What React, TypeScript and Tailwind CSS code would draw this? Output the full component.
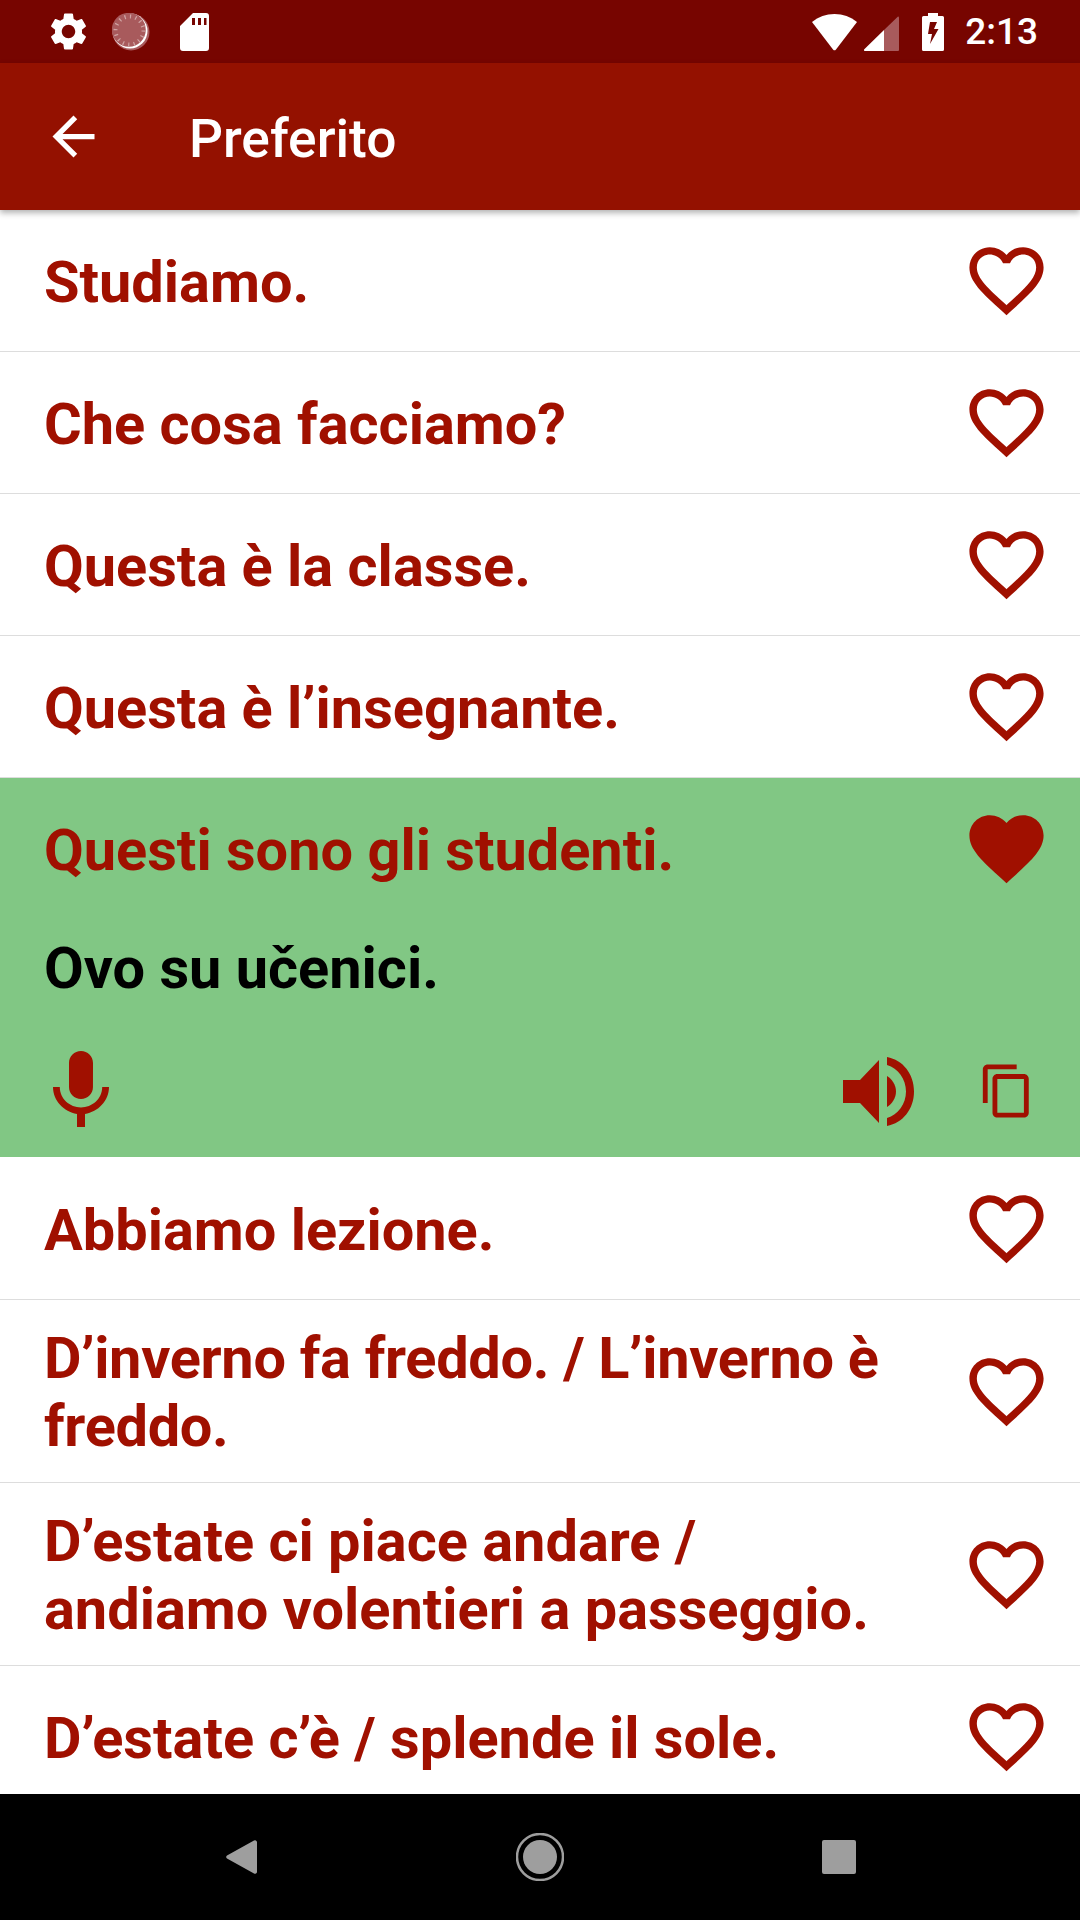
import React from "react";

const RED = "#a01000";
const HEART = "M16.5 3c-1.74 0-3.41.81-4.5 2.09C10.91 3.81 9.24 3 7.5 3 4.42 3 2 5.42 2 8.5c0 3.78 3.4 6.86 8.55 11.54L12 21.35l1.45-1.32C18.6 15.36 22 12.28 22 8.5 22 5.42 19.58 3 16.5 3z";
const HEART_O = "M16.5 3c-1.74 0-3.41.81-4.5 2.09C10.91 3.81 9.24 3 7.5 3 4.42 3 2 5.42 2 8.5c0 3.78 3.4 6.86 8.55 11.54L12 21.35l1.45-1.32C18.6 15.36 22 12.28 22 8.5 22 5.42 19.58 3 16.5 3zm-4.4 15.55l-.1.1-.1-.1C7.14 14.24 4 11.39 4 8.5 4 6.5 5.5 5 7.5 5c1.54 0 3.04.99 3.57 2.36h1.87C13.46 5.99 14.96 5 16.5 5c2 0 3.5 1.5 3.5 3.5 0 2.89-3.14 5.74-7.9 10.05z";

function Heart({ filled }: { filled?: boolean }) {
  return (
    <svg viewBox="0 0 24 24" className="w-[89px] h-[89px] shrink-0" fill={RED}>
      <path d={filled ? HEART : HEART_O} />
    </svg>
  );
}

function Row({ text, tight }: { text: string; tight?: boolean }) {
  return (
    <div className="flex items-center justify-between min-h-[142px] py-[23px] pl-[44px] pr-[29px] border-b border-[#dddddd] shrink-0">
      <div className={tight ? "text-[57.7px] leading-[68px] font-bold text-[#a01000] w-[860px] pt-[1px] mb-[-1px] tracking-[-0.3px]" : "text-[57.7px] leading-[68px] font-bold text-[#a01000] w-[860px] pt-[1px] mb-[-1px]"}>{text}</div>
      <Heart />
    </div>
  );
}

export default function App() {
  return (
    <div className="w-[1080px] h-[1920px] flex flex-col bg-white overflow-hidden font-['Roboto',sans-serif]">
      {/* Status bar */}
      <div className="h-[63px] bg-[#770500] flex items-center shrink-0 pl-[46px] pr-[42px]">
        <svg viewBox="0 0 24 24" className="w-[45px] h-[45px]" fill="#fff">
          <path d="M19.14 12.94c.04-.3.06-.61.06-.94 0-.32-.02-.64-.07-.94l2.03-1.58c.18-.14.23-.41.12-.61l-1.92-3.32c-.12-.22-.37-.29-.59-.22l-2.39.96c-.5-.38-1.03-.7-1.62-.94l-.36-2.54c-.04-.24-.24-.41-.48-.41h-3.84c-.24 0-.43.17-.47.41l-.36 2.54c-.59.24-1.13.57-1.62.94l-2.39-.96c-.22-.08-.47 0-.59.22L2.74 8.87c-.12.21-.08.47.12.61l2.03 1.58c-.05.3-.09.63-.09.94s.02.64.07.94l-2.03 1.58c-.18.14-.23.41-.12.61l1.92 3.32c.12.22.37.29.59.22l2.39-.96c.5.38 1.03.7 1.62.94l.36 2.54c.05.24.24.41.48.41h3.84c.24 0 .44-.17.47-.41l.36-2.54c.59-.24 1.13-.56 1.62-.94l2.39.96c.22.08.47 0 .59-.22l1.92-3.32c.12-.22.07-.47-.12-.61l-2.01-1.58zM12 15.6c-1.98 0-3.6-1.62-3.6-3.6s1.62-3.6 3.6-3.6 3.6 1.62 3.6 3.6-1.62 3.6-3.6 3.6z" />
        </svg>
        <svg viewBox="0 0 38 38" className="w-[38px] h-[38px] ml-[21px]">
          <circle cx="19" cy="19" r="18.500" fill="#a85a5c" />
          <circle cx="18" cy="18" r="17.500" fill="#fff" />
          <circle cx="16.800" cy="16.800" r="17" fill="#a85a5c" />
          <circle cx="17.500" cy="17.500" r="14" fill="none" stroke="#d0a4a4" strokeWidth="4" strokeDasharray="1.2 4.3" />
        </svg>
        <svg viewBox="0 0 29 38" className="w-[29px] h-[38px] ml-[30px]" fill="#fff">
          <path fillRule="evenodd" d="M13 0H26a3 3 0 0 1 3 3V35a3 3 0 0 1-3 3H3a3 3 0 0 1-3-3V13ZM12 5V12H15V5ZM18 5V12H21V5ZM24 5V12H26.500V5Z" />
        </svg>
        <div className="flex-1" />
        <svg viewBox="0 0 45 37" className="w-[45px] h-[37px] mt-[1px]" fill="#fff">
          <path d="M22.500 0C14 0 6.500 2.800 0 8L21 35.500a2 2 0 0 0 3 0L45 8C38.500 2.800 31 0 22.500 0Z" />
        </svg>
        <svg viewBox="0 0 35 35" className="w-[35px] h-[35px] ml-[7px] mt-[3px]">
          <path d="M34 0.500a1 1 0 0 1 1 1V34a1 1 0 0 1-1 1H20V14Z" fill="#a85a5c" />
          <path d="M20 14V35H1a1 1 0 0 1-.7-1.700Z" fill="#fff" />
        </svg>
        <svg viewBox="0 0 22 38" className="w-[22px] h-[38px] ml-[23px]" fill="#fff">
          <path fillRule="evenodd" d="M6 0H16V3H20.500a1.500 1.500 0 0 1 1.500 1.500V36.500a1.500 1.500 0 0 1-1.500 1.500H1.500A1.500 1.500 0 0 1 0 36.500V4.500A1.500 1.500 0 0 1 1.500 3H6ZM8 9 6 21H10L8 31 16.500 16H12L15 9Z" />
        </svg>
        <div className="text-[37px] leading-none text-white font-medium ml-[21px]">2:13</div>
      </div>

      {/* Toolbar */}
      <div className="h-[147px] bg-[#941100] flex items-center shrink-0 relative z-10 shadow-[0_3px_6px_rgba(0,0,0,0.3)]">
        <svg viewBox="0 0 24 24" className="w-[63px] h-[63px] ml-[42px]" fill="#fff">
          <path d="M20 11H7.830l5.590-5.590L12 4l-8 8 8 8 1.410-1.410L7.830 13H20v-2z" />
        </svg>
        <div className="text-[53.3px] leading-none text-white font-medium ml-[84px] mt-[6px]">Preferito</div>
      </div>

      {/* List */}
      <div className="flex-1 overflow-hidden flex flex-col min-h-0">
        <Row text="Studiamo." />
        <Row text="Che cosa facciamo?" />
        <Row text="Questa è la classe." />
        <Row text="Questa è l’insegnante." />

        <div className="h-[379px] mb-[1px] bg-[#81c784] shrink-0 flex flex-col">
          <div className="flex items-start justify-between pl-[44px] pr-[29px] pt-[26px]">
            <div className="text-[57.7px] leading-[68px] font-bold text-[#a01000] mt-[12px]">Questi sono gli studenti.</div>
            <Heart filled />
          </div>
          <div className="text-[57.7px] leading-[68px] font-bold text-black pl-[44px] mt-[41px]">Ovo su učenici.</div>
          <div className="flex items-center pl-[33px] pr-[44px] mt-[41px] h-[96px]">
            <svg viewBox="0 0 24 24" className="w-[96px] h-[96px]" fill={RED}>
              <path d="M12 14c1.660 0 2.990-1.340 2.990-3L15 5c0-1.660-1.340-3-3-3S9 3.340 9 5v6c0 1.660 1.340 3 3 3zm5.300-3c0 3-2.540 5.100-5.300 5.100S6.700 14 6.700 11H5c0 3.410 2.720 6.230 6 6.720V21h2v-3.280c3.280-.48 6-3.300 6-6.720h-1.700z" />
            </svg>
            <div className="flex-1" />
            <svg viewBox="0 0 71 69" className="w-[71px] h-[69px]" fill={RED}>
              <path d="M0 23H17L36 3V66L17 46H0Z" />
              <path d="M44 19C49 22 53 28 53 34.500S49 47 44 50Z" />
              <path d="M44 0C60 3 71 17 71 34.500S60 66 44 69V61C55 58 63 47 63 34.500S55 11 44 8Z" />
            </svg>
            <svg viewBox="0 0 24 24" className="w-[58px] h-[58px] ml-[64px]" fill={RED}>
              <path d="M16 1H4c-1.100 0-2 .9-2 2v14h2V3h12V1zm3 4H8c-1.100 0-2 .9-2 2v14c0 1.100.9 2 2 2h11c1.100 0 2-.9 2-2V7c0-1.100-.9-2-2-2zm0 16H8V7h11v14z" />
            </svg>
          </div>
        </div>

        <Row text="Abbiamo lezione." />
        <Row tight text="D’inverno fa freddo. / L’inverno è freddo." />
        <Row text="D’estate ci piace andare / andiamo volentieri a passeggio." />
        <Row text="D’estate c’è / splende il sole." />
      </div>

      {/* Nav bar */}
      <div className="h-[126px] bg-black shrink-0 flex items-center relative">
        <svg viewBox="0 0 31 34" className="w-[31px] h-[34px] ml-[226px]" fill="#9e9e9e">
          <path d="M1 15.500 28 0.500a2 2 0 0 1 3 1.500V32a2 2 0 0 1-3 1.500L1 18.500a2 2 0 0 1 0-3Z" />
        </svg>
        <svg viewBox="0 0 48 48" className="w-[48px] h-[48px] ml-[259px]" fill="#9e9e9e">
          <circle cx="24" cy="24" r="23" fill="none" stroke="#9e9e9e" strokeWidth="2.500" />
          <circle cx="24" cy="24" r="17" />
        </svg>
        <div className="w-[34px] h-[34px] bg-[#9e9e9e] rounded-[2px] ml-[258px]" />
      </div>
    </div>
  );
}
